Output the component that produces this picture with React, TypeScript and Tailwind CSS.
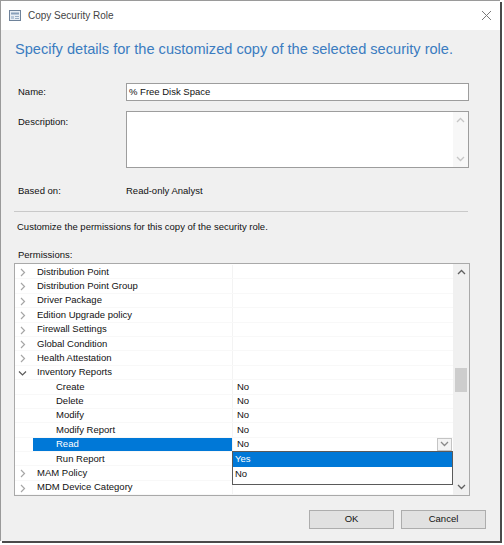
import React from "react";

type Row = { name: string; kind: "closed" | "open" | "leaf"; value?: string; selected?: boolean };

const rows: Row[] = [
  { name: "Distribution Point", kind: "closed" },
  { name: "Distribution Point Group", kind: "closed" },
  { name: "Driver Package", kind: "closed" },
  { name: "Edition Upgrade policy", kind: "closed" },
  { name: "Firewall Settings", kind: "closed" },
  { name: "Global Condition", kind: "closed" },
  { name: "Health Attestation", kind: "closed" },
  { name: "Inventory Reports", kind: "open" },
  { name: "Create", kind: "leaf", value: "No" },
  { name: "Delete", kind: "leaf", value: "No" },
  { name: "Modify", kind: "leaf", value: "No" },
  { name: "Modify Report", kind: "leaf", value: "No" },
  { name: "Read", kind: "leaf", value: "No", selected: true },
  { name: "Run Report", kind: "leaf", value: "" },
  { name: "MAM Policy", kind: "closed" },
  { name: "MDM Device Category", kind: "closed" },
];

const Chevron = ({ open }: { open: boolean }) =>
  open ? (
    <svg width="9" height="9" viewBox="0 0 9 9" className="shrink-0">
      <path d="M1 2.5 L4.5 6 L8 2.5" fill="none" stroke="#5a5a5a" strokeWidth="1.2" />
    </svg>
  ) : (
    <svg width="9" height="9" viewBox="0 0 9 9" className="shrink-0">
      <path d="M3 1 L6.5 4.5 L3 8" fill="none" stroke="#a6a6a6" strokeWidth="1.2" />
    </svg>
  );

const ScrollArrow = ({ up, color }: { up: boolean; color: string }) => (
  <svg width="9" height="6" viewBox="0 0 9 6">
    <path
      d={up ? "M1 5 L4.5 1.5 L8 5" : "M1 1 L4.5 4.5 L8 1"}
      fill="none"
      stroke={color}
      strokeWidth="1.3"
    />
  </svg>
);

function TreeRow({ row }: { row: Row }) {
  const indent = row.kind === "leaf" ? "pl-[41px]" : "pl-[22px]";
  return (
    <div className="flex h-[14.4px] items-stretch border-b border-[#f8f8f8]">
      <div className="relative flex w-[218px] items-center border-r border-[#f3f3f3]">
        {row.kind !== "leaf" && (
          <div className="absolute left-[3px] top-[3px]">
            <Chevron open={row.kind === "open"} />
          </div>
        )}
        {row.selected ? (
          <div className="ml-[18px] flex h-full flex-1 items-center bg-[#0078d7] pl-[23px] text-white">
            {row.name}
          </div>
        ) : (
          <div className={indent}>{row.name}</div>
        )}
      </div>
      <div className="flex flex-1 items-center justify-between pl-[4px]">
        <span>{row.value}</span>
        {row.selected && (
          <div className="mr-[1px] flex h-[13px] w-[15px] items-center justify-center border border-[#c4c4c4] bg-[#f4f4f4]">
            <ScrollArrow up={false} color="#8a8a8a" />
          </div>
        )}
      </div>
    </div>
  );
}

export default function App() {
  return (
    <div className="h-[545px] w-[504px] bg-white font-['Liberation_Sans',Arial,sans-serif] text-[9.5px] text-[#111]">
      <div className="flex h-[541px] w-[500px] flex-col border-l border-t border-[#9a9a9a] bg-[#f0f0f0] shadow-[2px_2px_0_#4a4a4a]">
        {/* title bar */}
        <div className="flex h-[29px] items-center bg-white">
          <svg width="12" height="11" viewBox="0 0 12 11" className="ml-[8px]">
            <rect x="0.5" y="0.5" width="11" height="10" fill="#e9eef4" stroke="#6e829a" />
            <rect x="2" y="2.5" width="8" height="2" fill="#8aa0ba" />
            <rect x="2" y="6" width="3" height="3" fill="#b7c6d8" />
            <rect x="6" y="6" width="4" height="1" fill="#9aaec4" />
            <rect x="6" y="8" width="4" height="1" fill="#9aaec4" />
          </svg>
          <span className="ml-[7px] text-[10px] text-[#444]">Copy Security Role</span>
          <svg width="11" height="11" viewBox="0 0 11 11" className="ml-auto mr-[8px]">
            <path d="M1 1 L10 10 M10 1 L1 10" stroke="#7a7a7a" strokeWidth="1" />
          </svg>
        </div>

        {/* heading */}
        <div className="mt-[10px] h-[18px] pl-[14px] text-[14.6px] leading-[18px] text-[#3b7cc0]">
          Specify details for the customized copy of the selected security role.
        </div>

        {/* name */}
        <div className="mt-[25px] grid grid-cols-[125px_343px] items-center">
          <span className="pl-[17px]">Name:</span>
          <div className="flex h-[18px] items-center border border-[#9d9d9d] bg-white pl-[2px]">
            % Free Disk Space
          </div>
        </div>

        {/* description */}
        <div className="mt-[10px] grid grid-cols-[125px_343px]">
          <span className="pl-[17px] pt-[4px]">Description:</span>
          <div className="flex h-[57px] border border-[#9d9d9d] bg-white">
            <div className="flex-1" />
            <div className="flex w-[15px] flex-col items-center justify-between bg-[#f7f7f7] py-[5px]">
              <ScrollArrow up color="#c6c6c6" />
              <ScrollArrow up={false} color="#c6c6c6" />
            </div>
          </div>
        </div>

        {/* based on */}
        <div className="mt-[16px] grid h-[14px] grid-cols-[125px_343px] items-center">
          <span className="pl-[17px]">Based on:</span>
          <span>Read-only Analyst</span>
        </div>

        <div className="ml-[13px] mt-[13px] h-px w-[454px] bg-[#c9c9c9]" />

        <div className="mt-[8px] h-[14px] pl-[16px] leading-[14px]">
          Customize the permissions for this copy of the security role.
        </div>

        <div className="mt-[14px] h-[14px] pl-[17px] leading-[14px]">Permissions:</div>

        {/* tree */}
        <div className="relative ml-[13px] mt-px flex h-[233px] w-[456px] overflow-hidden border border-[#a9a9a9] bg-white">
          <div className="flex-1 overflow-hidden pt-px">
            {rows.map((r) => (
              <TreeRow key={r.name} row={r} />
            ))}
          </div>
          <div className="flex w-[16px] flex-col bg-[#f0f0f0]">
            <div className="flex h-[16px] items-center justify-center">
              <ScrollArrow up color="#606060" />
            </div>
            <div className="flex-1">
              <div className="mx-[2px] mt-[88px] h-[24px] bg-[#cdcdcd]" />
            </div>
            <div className="flex h-[16px] items-center justify-center">
              <ScrollArrow up={false} color="#606060" />
            </div>
          </div>

          {/* open dropdown */}
          <div className="absolute left-[217px] top-[187px] flex h-[34px] w-[221px] flex-col border border-[#5a5a5a] bg-white">
            <div className="flex h-[15px] items-center bg-[#0078d7] pl-[2px] text-white">Yes</div>
            <div className="flex h-[15px] items-center pl-[2px]">No</div>
          </div>
        </div>

        {/* buttons */}
        <div className="mt-[14px] flex justify-end gap-[7px] pr-[14px]">
          <button className="h-[19px] w-[85px] border border-[#adadad] bg-[#e1e1e1]">OK</button>
          <button className="h-[19px] w-[85px] border border-[#adadad] bg-[#e1e1e1]">Cancel</button>
        </div>
      </div>
    </div>
  );
}
